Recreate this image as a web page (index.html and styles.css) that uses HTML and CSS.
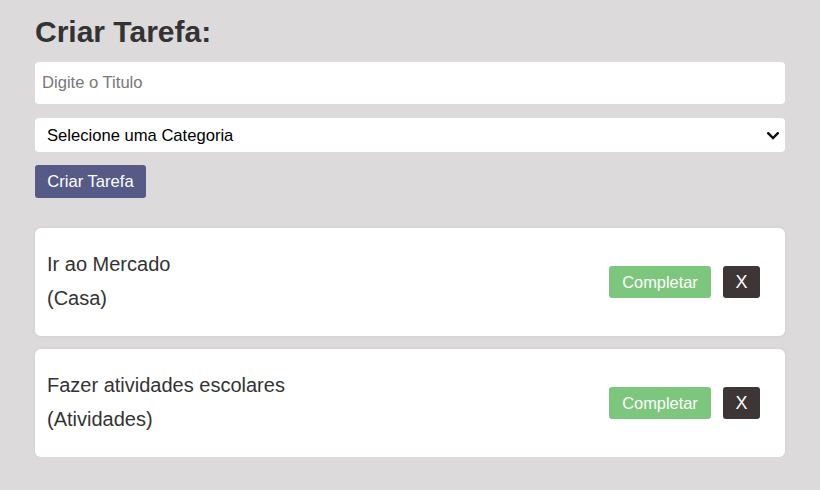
FILE: index.html
```html
<!DOCTYPE html>
<html lang="pt">
<head>
<meta charset="utf-8">
<title>Tarefas</title>
<link rel="stylesheet" href="styles.css">
</head>
<body>
<main class="app">
  <h1 class="title">Criar Tarefa:</h1>
  <form class="form">
    <input class="input" type="text" placeholder="Digite o Titulo">
    <div class="select-wrap">
      <select class="select">
        <option>Selecione uma Categoria</option>
      </select>
      <svg class="chevron" width="12" height="8" viewBox="0 0 12 8" aria-hidden="true">
        <path d="M1.2 1.2 L6 6 L10.8 1.2" fill="none" stroke="#111" stroke-width="2.4" stroke-linecap="square"/>
      </svg>
    </div>
    <div><button type="button" class="btn-create">Criar Tarefa</button></div>
  </form>
  <ul class="list">
    <li class="card">
      <div class="card-text">
        <span>Ir ao Mercado</span>
        <span>(Casa)</span>
      </div>
      <div class="card-actions">
        <button type="button" class="btn-done">Completar</button>
        <button type="button" class="btn-del">X</button>
      </div>
    </li>
    <li class="card">
      <div class="card-text">
        <span>Fazer atividades escolares</span>
        <span>(Atividades)</span>
      </div>
      <div class="card-actions">
        <button type="button" class="btn-done">Completar</button>
        <button type="button" class="btn-del">X</button>
      </div>
    </li>
  </ul>
</main>
</body>
</html>
```
FILE: styles.css
```css
* { box-sizing: border-box; }
html, body { margin: 0; padding: 0; }
body {
  background: #dcdadb;
  font-family: "Liberation Sans", Arial, sans-serif;
  color: #333;
}
.app {
  width: 750px;
  margin-left: 35px;
  padding-top: 15px;
}
.title {
  margin: 0 0 14px 0;
  font-size: 30px;
  line-height: 33px;
  font-weight: bold;
  color: #333;
}
.form {
  display: flex;
  flex-direction: column;
  gap: 14px;
}
.input {
  height: 42px;
  border: none;
  border-radius: 4px;
  background: #fff;
  padding: 0 7px;
  font-family: inherit;
  font-size: 16.6px;
  color: #333;
  outline: none;
}
.input::placeholder { color: #777; }
.select-wrap {
  position: relative;
  margin-bottom: -1px;
}
.select {
  display: block;
  width: 100%;
  height: 34px;
  border: none;
  border-radius: 4px;
  background: #fff;
  padding: 0 12px;
  font-family: inherit;
  font-size: 16.6px;
  color: #000;
  -webkit-appearance: none;
  appearance: none;
  outline: none;
}
.chevron {
  position: absolute;
  right: 6px;
  top: 14px;
  pointer-events: none;
}
.btn-create {
  height: 33px;
  width: 111px;
  border: none;
  border-radius: 3px;
  background: #565a86;
  color: #fff;
  font-family: inherit;
  font-size: 16.6px;
  padding: 0;
}
.list {
  list-style: none;
  margin: 30px 0 0 0;
  padding: 0;
  display: flex;
  flex-direction: column;
  gap: 13px;
}
.card {
  background: #fff;
  border-radius: 6px;
  box-shadow: 0 0 4px rgba(0,0,0,0.06);
  padding: 19px 25px 21px 12px;
  display: flex;
  align-items: center;
  justify-content: space-between;
}
.card-text {
  display: flex;
  flex-direction: column;
  font-size: 20px;
  line-height: 34px;
  color: #333;
}
.card-actions {
  display: flex;
  gap: 12px;
  align-items: center;
  padding-top: 2px;
}
.btn-done {
  height: 32px;
  width: 102px;
  border: none;
  border-radius: 3px;
  background: #7dc67e;
  color: #fff;
  font-family: inherit;
  font-size: 16.4px;
  padding: 0;
}
.btn-del {
  height: 32px;
  width: 37px;
  border: none;
  border-radius: 3px;
  background: #3d3536;
  color: #fff;
  font-family: inherit;
  font-size: 18px;
  padding: 0;
}
```
